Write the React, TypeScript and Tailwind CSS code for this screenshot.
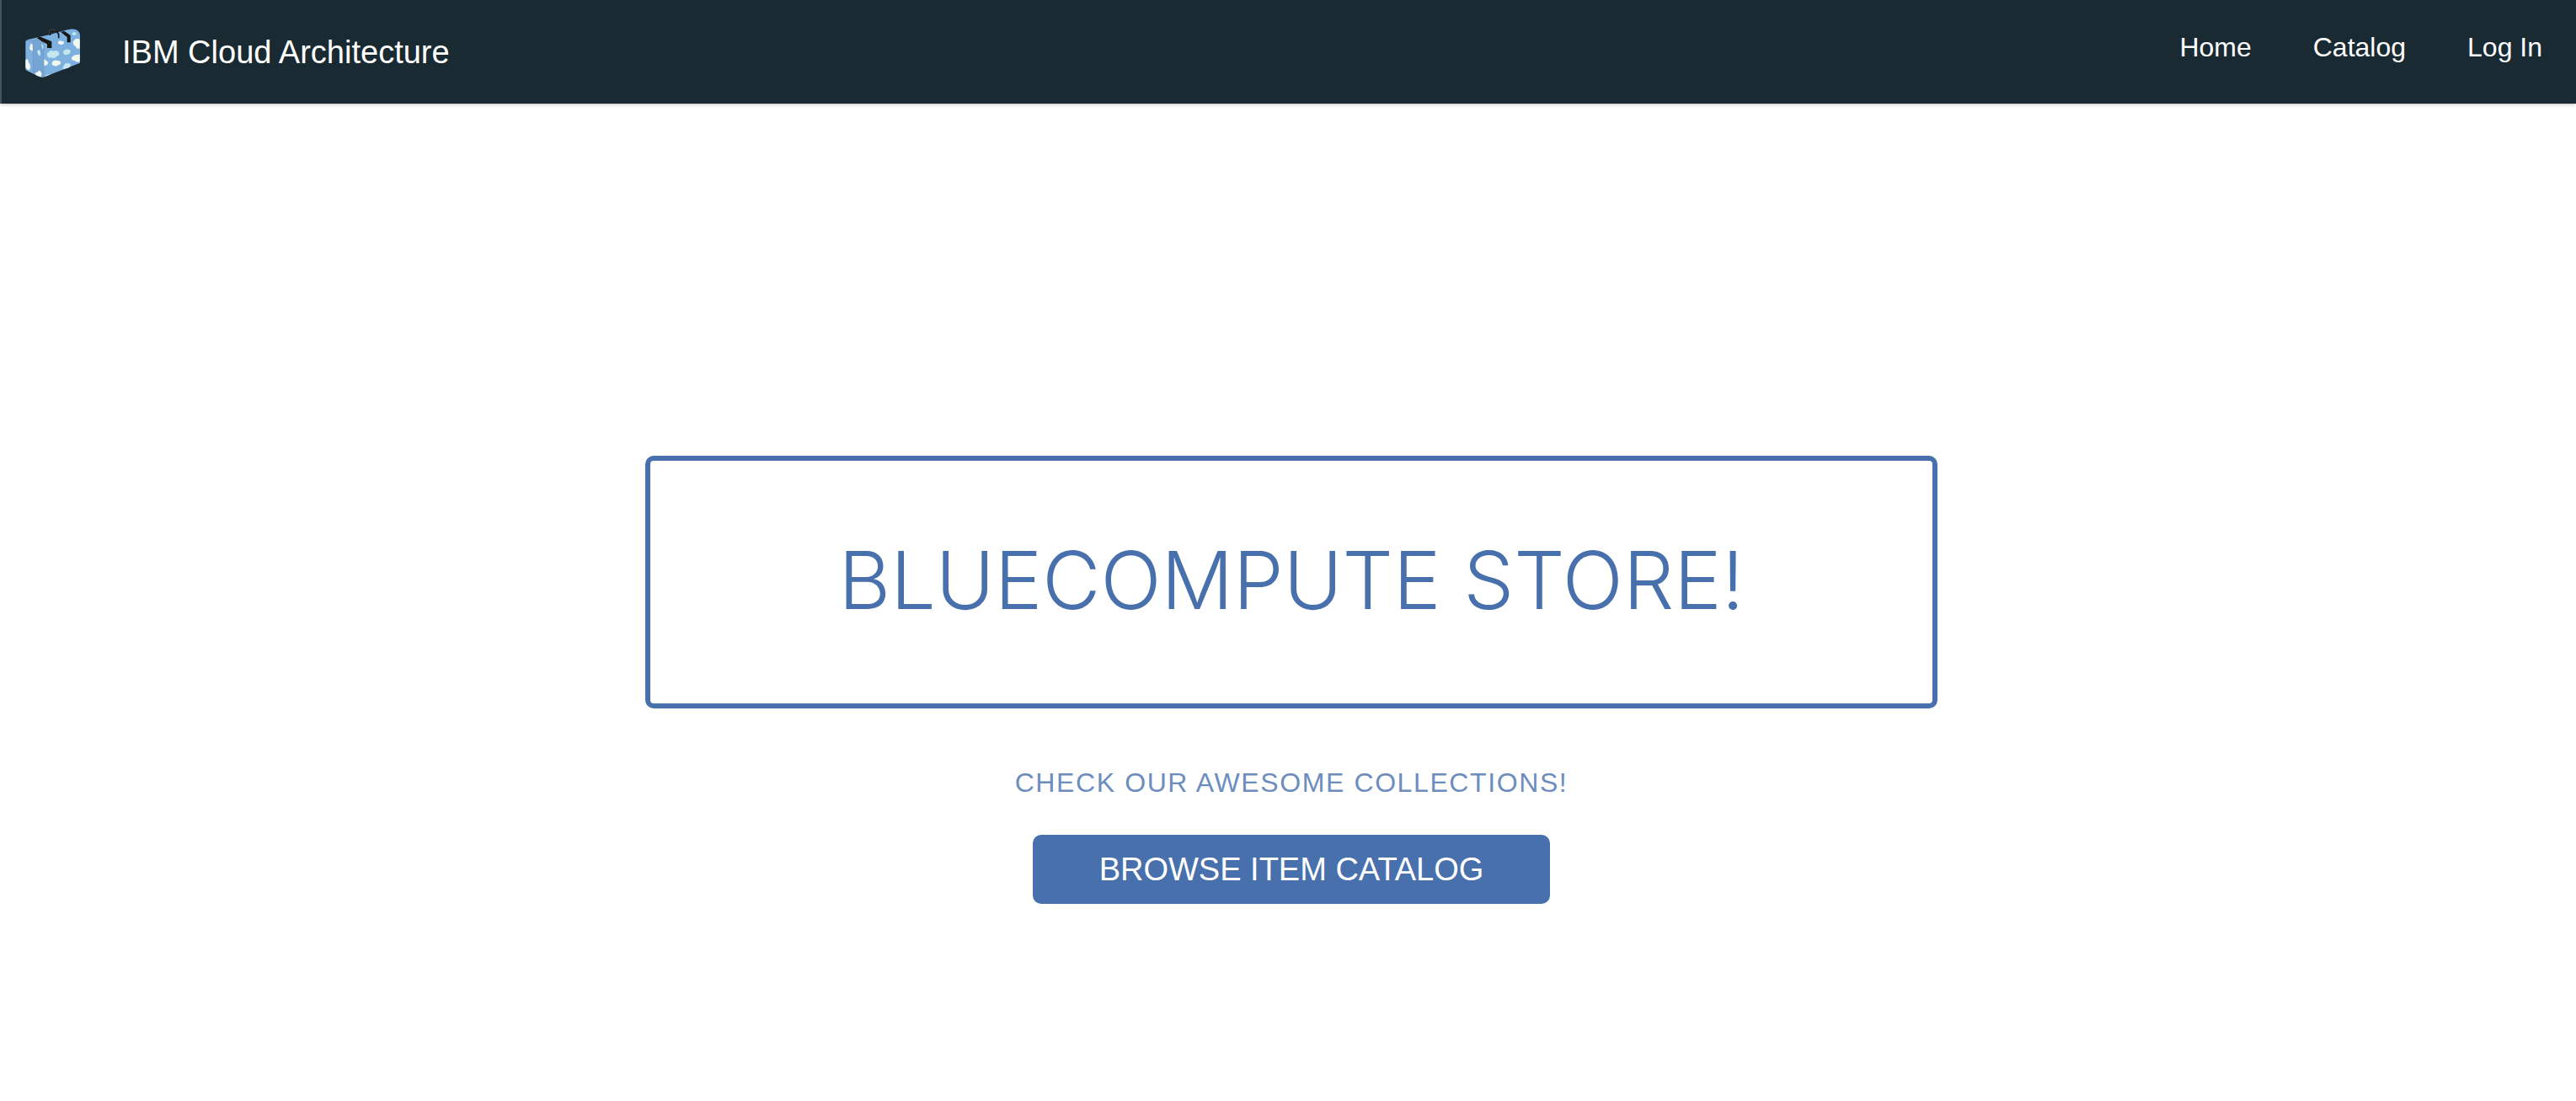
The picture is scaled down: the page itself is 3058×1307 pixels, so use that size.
const navLinks = ["Home", "Catalog", "Log In"];

function SuitcaseLogo() {
  return (
    <svg viewBox="0 0 195 174" className="mt-[2px] h-[58px] w-[65px]" role="img" aria-label="Suitcase">
      <path d="M1 45Q3 40 12 38L48 30L85 22L150 4Q170-1 184 5Q195 12 195 25V122L68 172Q57 175 48 170L8 151Q1 148 1 143Z" fill="#7db1e0" />
      <path d="M27 42Q45 35 56 45Q66 54 65 68V173L48 170L28 160Z" fill="#74a5d5" />
      <g fill="#f3f8ee">
        <path d="M1 112Q7 105 10 113L12 121Q19 126 18 135Q19 145 12 147L3 142L1 137Z" />
        <path d="M18 58Q24 49 27 58V78Q22 82 20 76Q13 74 16 66Z" />
        <path d="M44 155Q50 145 54 153Q61 158 57 166Q60 174 50 170Q38 168 35 160Q40 153 44 155Z" />
        <path d="M66 111Q72 106 73 114Q83 117 81 122Q80 131 66 132Z" />
        <path d="M98 117Q107 110 114 114Q125 112 126 121Q126 130 117 130Q109 137 103 131Q94 132 95 123Q96 118 98 117Z" />
        <path d="M117 47Q123 40 129 44Q139 44 138 52Q132 60 125 56Q115 56 117 47Z" />
        <path d="M172 44Q176 35 187 35L194 39V70Q183 75 180 64Q170 59 171 52Q167 48 172 44Z" />
        <path d="M168 100Q175 91 186 93L194 91V117Q183 122 176 114Q164 114 165 106Q164 101 168 100Z" />
      </g>
      <g fill="#c4e6ee">
        <path d="M81 85Q91 74 101 80Q115 74 120 86Q122 96 113 98Q103 109 93 103Q80 107 79 97Q74 91 81 85Z" />
        <path d="M137 79Q145 71 152 74Q162 73 161 83Q158 92 149 92Q139 96 137 89Q132 84 137 79Z" />
        <path d="M137 132Q141 122 151 123Q162 123 162 133Q159 140 137 145Q130 143 137 132Z" />
        <path d="M168 15Q177 8 182 18Q182 25 172 24Q165 22 168 15Z" />
        <path d="M43 80Q48 73 52 78Q57 88 53 97Q46 97 46 89Q40 85 43 80Z" />
        <path d="M69 172Q75 162 92 162Z" />
        <path d="M57 54Q65 56 65 66Q64 76 61 72Z" />
      </g>
      <g fill="none" stroke="#7394b5" strokeWidth="2">
        <path d="M2 44Q16 40 23 44Q28 47 28 59V160" />
        <path d="M22 44Q44 33 63 51Q67 60 66 75V172" />
      </g>
      <path d="M40 32L54 29L94 46V69H78V55L60 46Z" fill="#171715" />
      <path d="M126 11L139 9L161 24V49H149V30L140 23Z" fill="#171715" />
      <path d="M88 24V9L94 5L111 10L119 20V34" fill="none" stroke="#171715" strokeWidth="5" />
      <path d="M86 18V7L94 3L109 7" fill="none" stroke="#65645f" strokeWidth="2" />
    </svg>
  );
}

export default function App() {
  return (
    <div className="min-h-screen bg-white font-['Liberation_Sans',Arial,sans-serif]">
      <header className="flex h-[123px] items-center justify-between border-l-2 border-[#47545c] bg-[#1a2a33] pr-10 pl-7 text-white shadow-[0_1px_4px_rgba(0,0,0,0.25)]">
        <a href="#" className="flex items-center gap-[50px] text-[38px] leading-[48px]">
          <SuitcaseLogo />
          <span>IBM Cloud Architecture</span>
        </a>
        <nav className="flex gap-[73px] pb-3 text-[32px] leading-[40px]">
          {navLinks.map((label) => (
            <a key={label} href="#">{label}</a>
          ))}
        </nav>
      </header>
      <main className="flex flex-col items-center pt-[418px] pl-2 text-center text-[#4870ad]">
        <h1 className="w-full max-w-[1534px] rounded-[10px] border-[6px] border-current pt-[82px] pb-[86px] font-['Inter',sans-serif] text-[95px] leading-[120px] font-light">
          BLUECOMPUTE STORE!
        </h1>
        <p className="mt-[68px] text-[32px] leading-[40px] tracking-[0.05em] text-[#6d8dbd]">
          CHECK OUR AWESOME COLLECTIONS!
        </p>
        <button type="button" className="mt-[42px] h-[82px] w-full max-w-[614px] rounded-[10px] bg-[#4870ad] text-[38px] leading-[48px] text-white">
          BROWSE ITEM CATALOG
        </button>
      </main>
    </div>
  );
}
